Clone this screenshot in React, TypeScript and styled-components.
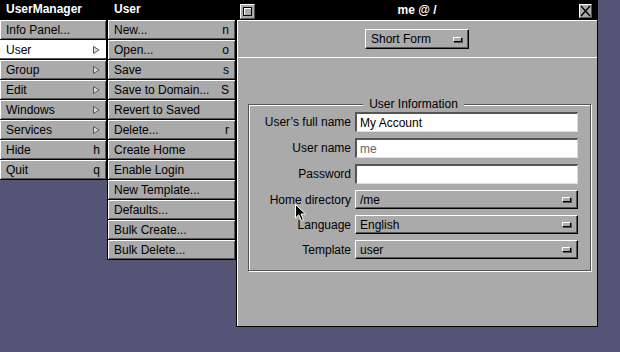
import React from "react";
import styled, { createGlobalStyle } from "styled-components";

const GlobalStyle = createGlobalStyle`
  html, body {
    margin: 0;
    padding: 0;
  }
  body {
    background: #545477;
    font-family: "Liberation Sans", Arial, sans-serif;
    font-size: 12px;
    overflow: hidden;
  }
`;

const Desktop = styled.div`
  position: relative;
  display: flex;
  align-items: flex-start;
  width: 620px;
  height: 352px;
  background: #545477;
`;

interface MenuPanelProps {
  $width: number;
  $leftBorder?: boolean;
}

const MenuPanel = styled.div<MenuPanelProps>`
  width: ${(p) => p.$width}px;
  flex-shrink: 0;
  box-sizing: border-box;
  display: flex;
  flex-direction: column;
  border-right: 1px solid #000;
  border-left: ${(p) => (p.$leftBorder ? "1px solid #000" : "none")};
`;

const MenuTitle = styled.div`
  height: 20px;
  box-sizing: border-box;
  padding-left: 6px;
  background: #000;
  color: #fff;
  font-weight: bold;
  font-size: 12px;
  line-height: 18px;
`;

interface MenuItemProps {
  $selected?: boolean;
}

const MenuItem = styled.div<MenuItemProps>`
  height: 20px;
  box-sizing: border-box;
  display: flex;
  align-items: center;
  justify-content: space-between;
  padding: 0 6px 0 6px;
  background: ${(p) => (p.$selected ? "#fff" : "#aaa")};
  border-bottom: 1px solid #000;
  box-shadow: ${(p) =>
    p.$selected
      ? "inset 0 -1px 0 #555"
      : "inset 1px 1px 0 #fff, inset -1px -1px 0 #555"};
  color: #000;
  white-space: nowrap;
`;

const KeyEquiv = styled.span`
  font-size: 12px;
`;

const Window = styled.div`
  width: 362px;
  height: 327px;
  flex-shrink: 0;
  box-sizing: border-box;
  border: 1px solid #000;
  background: #aaa;
  display: flex;
  flex-direction: column;
`;

const TitleBar = styled.div`
  height: 19px;
  display: flex;
  align-items: center;
  padding: 0 5px 0 3px;
  background: #000;
  color: #fff;
  font-weight: bold;
`;

const TitleText = styled.div`
  flex: 1;
  text-align: center;
  line-height: 19px;
`;

const MiniButton = styled.div`
  width: 15px;
  height: 15px;
  box-sizing: border-box;
  background: #aaa;
  border: 1px solid;
  border-color: #fff #555 #555 #fff;
  display: flex;
  align-items: center;
  justify-content: center;
  margin-top: 1px;
`;

const MiniInner = styled.div`
  width: 9px;
  height: 9px;
  box-sizing: border-box;
  border: 1px solid #000;
  background: #aaa;
  box-shadow: inset 1px 1px 0 #fff;
`;

const CloseButton = styled.div`
  width: 13px;
  height: 14px;
  box-sizing: border-box;
  background: #aaa;
  border: 1px solid;
  border-color: #fff #555 #555 #fff;
  display: flex;
  align-items: center;
  justify-content: center;
`;

const WindowBody = styled.div`
  flex: 1;
  display: flex;
  flex-direction: column;
  box-shadow: inset 1px 1px 0 #fff;
`;

const TopBar = styled.div`
  display: flex;
  justify-content: center;
  padding: 9px 0 8px;
  border-bottom: 1px solid #fff;
`;

interface PopUpProps {
  $width: number;
  $height: number;
}

const PopUp = styled.div<PopUpProps>`
  width: ${(p) => p.$width}px;
  height: ${(p) => p.$height}px;
  box-sizing: border-box;
  display: flex;
  align-items: center;
  justify-content: space-between;
  padding: 0 6px 0 4px;
  background: #aaa;
  border: 1px solid;
  border-color: #fff #000 #000 #fff;
  box-shadow: inset -1px -1px 0 #555;
  color: #000;
`;

const PopIcon = styled.span`
  width: 9px;
  height: 5px;
  box-sizing: border-box;
  background: #aaa;
  border: 1px solid;
  border-color: #fff #000 #000 #fff;
  box-shadow: 1px 1px 0 #555;
`;

const GroupBox = styled.fieldset`
  margin: 39px 6px 0 11px;
  padding: 1px 12px 11px 0;
  min-width: 0;
  border: 1px solid #555;
  box-shadow: inset 1px 1px 0 #fff, 1px 1px 0 #fff;
`;

const GroupTitle = styled.legend`
  margin: 0 auto;
  padding: 0 6px;
  line-height: 14px;
  background: #aaa;
  color: #000;
`;

const FormGrid = styled.div`
  display: grid;
  grid-template-columns: 1fr 223px;
  column-gap: 4px;
  row-gap: 6px;
  align-items: center;
`;

const Label = styled.label`
  text-align: right;
  color: #000;
  white-space: nowrap;
`;

interface FieldProps {
  $muted?: boolean;
}

const TextField = styled.input<FieldProps>`
  display: block;
  width: 223px;
  height: 20px;
  box-sizing: border-box;
  margin: 0;
  padding: 0 0 0 3px;
  background: #fff;
  border-style: solid;
  border-width: 2px 1px 1px 2px;
  border-color: #555 #ddd #ddd #555;
  font-family: "Liberation Sans", Arial, sans-serif;
  font-size: 12px;
  color: ${(p) => (p.$muted ? "#666" : "#000")};
  outline: none;
`;

const Cursor = styled.svg`
  position: absolute;
  left: 295px;
  top: 204px;
`;

const SubArrow = () => (
  <svg width="7" height="8" viewBox="0 0 7 8">
    <polygon points="0.5,0.5 6,4 0.5,7.5" fill="#ddd" stroke="#555" strokeWidth="1" />
  </svg>
);

const appMenu: { label: string; key?: string; sub?: boolean; selected?: boolean }[] = [
  { label: "Info Panel..." },
  { label: "User", sub: true, selected: true },
  { label: "Group", sub: true },
  { label: "Edit", sub: true },
  { label: "Windows", sub: true },
  { label: "Services", sub: true },
  { label: "Hide", key: "h" },
  { label: "Quit", key: "q" },
];

const userMenu: { label: string; key?: string }[] = [
  { label: "New...", key: "n" },
  { label: "Open...", key: "o" },
  { label: "Save", key: "s" },
  { label: "Save to Domain...", key: "S" },
  { label: "Revert to Saved" },
  { label: "Delete...", key: "r" },
  { label: "Create Home" },
  { label: "Enable Login" },
  { label: "New Template..." },
  { label: "Defaults..." },
  { label: "Bulk Create..." },
  { label: "Bulk Delete..." },
];

const App: React.FC = () => {
  return (
    <Desktop>
      <GlobalStyle />
      <MenuPanel $width={107}>
        <MenuTitle>UserManager</MenuTitle>
        {appMenu.map((item) => (
          <MenuItem key={item.label} $selected={item.selected}>
            <span>{item.label}</span>
            {item.sub ? <SubArrow /> : item.key && <KeyEquiv>{item.key}</KeyEquiv>}
          </MenuItem>
        ))}
      </MenuPanel>

      <MenuPanel $width={129} $leftBorder>
        <MenuTitle>User</MenuTitle>
        {userMenu.map((item) => (
          <MenuItem key={item.label}>
            <span>{item.label}</span>
            {item.key && <KeyEquiv>{item.key}</KeyEquiv>}
          </MenuItem>
        ))}
      </MenuPanel>

      <Window>
        <TitleBar>
          <MiniButton>
            <MiniInner />
          </MiniButton>
          <TitleText>me @ /</TitleText>
          <CloseButton>
            <svg width="11" height="12" viewBox="0 0 11 12">
              <path d="M1 1 L10 11 M10 1 L1 11" stroke="#000" strokeWidth="1.4" />
            </svg>
          </CloseButton>
        </TitleBar>
        <WindowBody>
          <TopBar>
            <PopUp $width={104} $height={20}>
              <span style={{ paddingLeft: 1 }}>Short Form</span>
              <PopIcon />
            </PopUp>
          </TopBar>
          <GroupBox>
            <GroupTitle>User Information</GroupTitle>
            <FormGrid>
              <Label>User’s full name</Label>
              <TextField readOnly defaultValue="My Account" />
              <Label>User name</Label>
              <TextField readOnly defaultValue="me" $muted />
              <Label>Password</Label>
              <TextField readOnly type="password" defaultValue="" />
              <Label>Home directory</Label>
              <PopUp $width={223} $height={19}>
                <span>/me</span>
                <PopIcon />
              </PopUp>
              <Label>Language</Label>
              <PopUp $width={223} $height={19}>
                <span>English</span>
                <PopIcon />
              </PopUp>
              <Label>Template</Label>
              <PopUp $width={223} $height={19}>
                <span>user</span>
                <PopIcon />
              </PopUp>
            </FormGrid>
          </GroupBox>
        </WindowBody>
      </Window>

      <Cursor width="12" height="18" viewBox="0 0 12 18">
        <path
          d="M0.5 0.5 L0.5 14 L3.8 10.8 L6.3 16.5 L8.4 15.6 L6 10 L10.5 10 Z"
          fill="#000"
          stroke="#fff"
          strokeWidth="1"
        />
      </Cursor>
    </Desktop>
  );
};

export default App;
